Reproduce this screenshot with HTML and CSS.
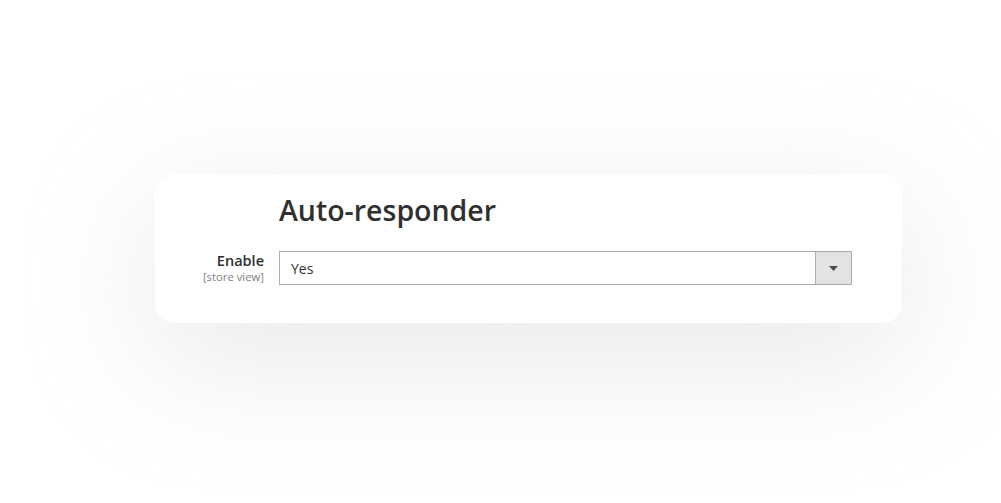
FILE: index.html
```html
<!DOCTYPE html>
<html lang="en">
<head>
<meta charset="utf-8">
<title>Auto-responder</title>
<link rel="stylesheet" href="styles.css">
</head>
<body>
<div class="page">
  <section class="card">
    <div class="row">
      <div class="label-col"></div>
      <h2 class="title">Auto-responder</h2>
    </div>
    <div class="row field">
      <div class="label-col">
        <span class="label">Enable</span>
        <span class="scope">[store view]</span>
      </div>
      <div class="select">
        <span class="select-value">Yes</span>
        <span class="select-btn">
          <svg width="9" height="5" viewBox="0 0 9 5"><path d="M0 0h9L4.5 5z" fill="#514943"/></svg>
        </span>
      </div>
    </div>
  </section>
</div>
</body>
</html>
```
FILE: styles.css
```css
html, body {
  margin: 0;
  padding: 0;
  background: #ffffff;
}
body {
  font-family: "Open Sans", "Liberation Sans", sans-serif;
  color: #303030;
  width: 1001px;
  height: 503px;
  overflow: hidden;
}
.page {
  display: flex;
  padding: 174px 0 0 155px;
}
.card {
  width: 747px;
  box-sizing: border-box;
  background: #ffffff;
  border-radius: 20px;
  padding: 21px 50px 38px 30px;
  box-shadow: 0 34px 130px rgba(168, 180, 188, 0.3);
}
.row {
  display: flex;
  gap: 15px;
}
.label-col {
  width: 79px;
  flex: none;
  display: flex;
  flex-direction: column;
  align-items: flex-end;
  text-align: right;
}
.title {
  margin: 0;
  font-size: 28.5px;
  font-weight: 600;
  line-height: 31px;
  color: #303030;
}
.field {
  margin-top: 25px;
}
.label {
  font-size: 14.5px;
  font-weight: 600;
  line-height: 19px;
  color: #303030;
}
.scope {
  font-size: 11.3px;
  line-height: 14px;
  color: #808080;
}
.select {
  flex: 1;
  display: flex;
  align-items: center;
  height: 34px;
  box-sizing: border-box;
  border: 1px solid #adadad;
  background: #ffffff;
}
.select-value {
  flex: 1;
  padding-left: 11px;
  font-size: 14px;
  color: #303030;
}
.select-btn {
  width: 35px;
  align-self: stretch;
  display: flex;
  align-items: center;
  justify-content: center;
  background: #e3e3e3;
  border-left: 1px solid #adadad;
}
```
